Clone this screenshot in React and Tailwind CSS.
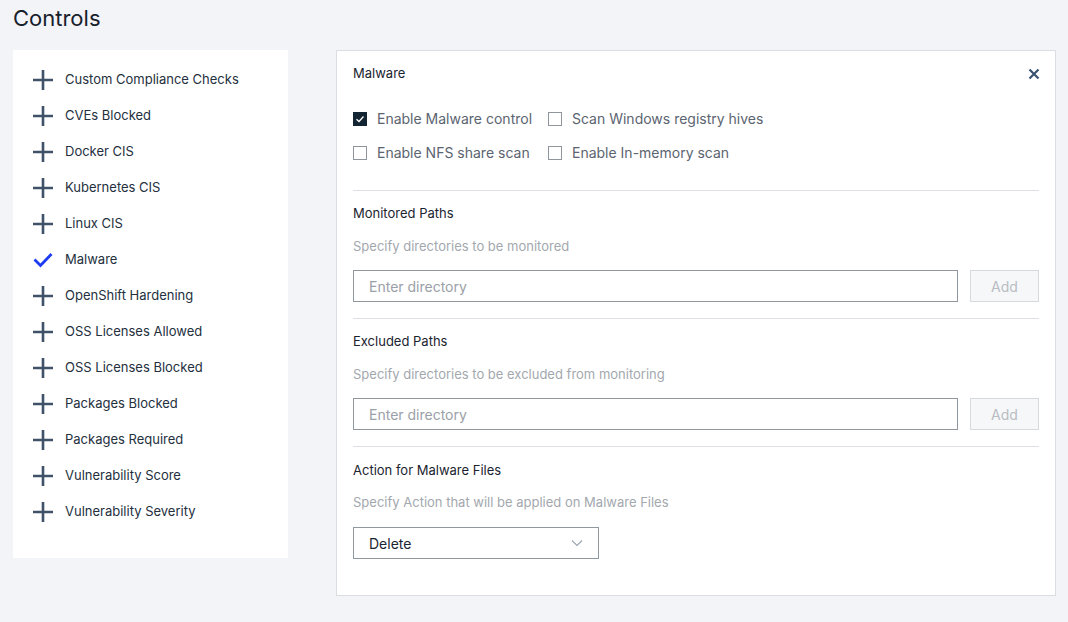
import React from "react";

const items = [
  "Custom Compliance Checks",
  "CVEs Blocked",
  "Docker CIS",
  "Kubernetes CIS",
  "Linux CIS",
  "Malware",
  "OpenShift Hardening",
  "OSS Licenses Allowed",
  "OSS Licenses Blocked",
  "Packages Blocked",
  "Packages Required",
  "Vulnerability Score",
  "Vulnerability Severity",
];

function Plus() {
  return (
    <svg width="20" height="20" viewBox="0 0 20 20">
      <path d="M10 0V20M0 10H20" stroke="#3f5269" strokeWidth="2.6" />
    </svg>
  );
}

function Check() {
  return (
    <svg width="20" height="20" viewBox="0 0 20 20">
      <path d="M1.5 9.5L7.5 15.5L18.5 4" stroke="#1d3bf0" strokeWidth="2.8" fill="none" />
    </svg>
  );
}

function Box({ checked, label }) {
  return (
    <label className="flex items-center gap-[10px] text-[14px] text-[#5b6470]">
      {checked ? (
        <span className="w-[14px] h-[14px] bg-[#132532] flex items-center justify-center">
          <svg width="10" height="10" viewBox="0 0 10 10">
            <path d="M1.5 5.2L4 7.5L8.5 2.5" stroke="white" strokeWidth="1.3" fill="none" />
          </svg>
        </span>
      ) : (
        <span className="w-[14px] h-[14px] border border-[#8e959d] bg-white" />
      )}
      <span>{label}</span>
    </label>
  );
}

function PathSection({ title, desc }) {
  return (
    <div className="border-b border-[#dcdfe3] pb-[16px]">
      <div className="text-[13px] text-[#1b2430] h-[22px] leading-[22px] mt-[11px]">{title}</div>
      <div className="text-[13px] text-[#a3a8ae] mt-[12px] leading-[20px]">{desc}</div>
      <div className="flex gap-[12px] mt-[14px]">
        <div className="flex-1 h-[32px] border border-[#8f979f] flex items-center px-[15px] text-[14px] text-[#9aa0a7]">
          Enter directory
        </div>
        <div className="w-[69px] h-[32px] border border-[#d6dadf] bg-[#f6f7f9] flex items-center justify-center text-[14px] text-[#b8bdc3]">
          Add
        </div>
      </div>
    </div>
  );
}

export default function App() {
  return (
    <div
      className="w-[1068px] h-[622px] bg-[#f3f4f8] overflow-hidden"
      style={{ fontFamily: "Inter, 'Noto Sans', sans-serif" }}
    >
      <div className="pl-[13px] pt-[4px] text-[22px] leading-[28px] text-[#17212b]">Controls</div>
      <div className="flex items-start mt-[18px] pl-[13px] gap-[48px]">
        <div className="w-[275px] h-[508px] bg-white pt-[12px] pl-[20px]">
          {items.map((it) => (
            <div key={it} className="flex items-center h-[36px] gap-[12px]">
              {it === "Malware" ? <Check /> : <Plus />}
              <span className="text-[13px] text-[#24303d]">{it}</span>
            </div>
          ))}
        </div>
        <div className="w-[720px] h-[546px] bg-white border border-[#dadde1] px-[16px]">
          <div className="flex items-center justify-between h-[44px] mt-[1px]">
            <span className="text-[13px] text-[#1b2430]">Malware</span>
            <svg width="12" height="12" viewBox="0 0 12 12" className="mr-[-1px]">
              <path d="M1.5 1.5L10.5 10.5M10.5 1.5L1.5 10.5" stroke="#3b5272" strokeWidth="2.2" />
            </svg>
          </div>
          <div className="border-b border-[#dcdfe3] pb-[27px] pt-[12px]">
            <div className="grid grid-cols-[195px_auto] gap-y-[13px]">
              <Box checked label="Enable Malware control" />
              <Box label="Scan Windows registry hives" />
              <Box label="Enable NFS share scan" />
              <Box label="Enable In-memory scan" />
            </div>
          </div>
          <PathSection title="Monitored Paths" desc="Specify directories to be monitored" />
          <PathSection title="Excluded Paths" desc="Specify directories to be excluded from monitoring" />
          <div>
            <div className="text-[13px] text-[#1b2430] h-[22px] leading-[22px] mt-[12px]">Action for Malware Files</div>
            <div className="text-[13px] text-[#a3a8ae] mt-[11px] leading-[20px]">
              Specify Action that will be applied on Malware Files
            </div>
            <div className="w-[246px] h-[32px] border border-[#8f979f] mt-[15px] flex items-center justify-between px-[15px]">
              <span className="text-[14px] text-[#1b2430]">Delete</span>
              <svg width="12" height="8" viewBox="0 0 12 8">
                <path d="M1 1.5L6 6.5L11 1.5" stroke="#9aa4b2" strokeWidth="1.1" fill="none" />
              </svg>
            </div>
          </div>
        </div>
      </div>
    </div>
  );
}
